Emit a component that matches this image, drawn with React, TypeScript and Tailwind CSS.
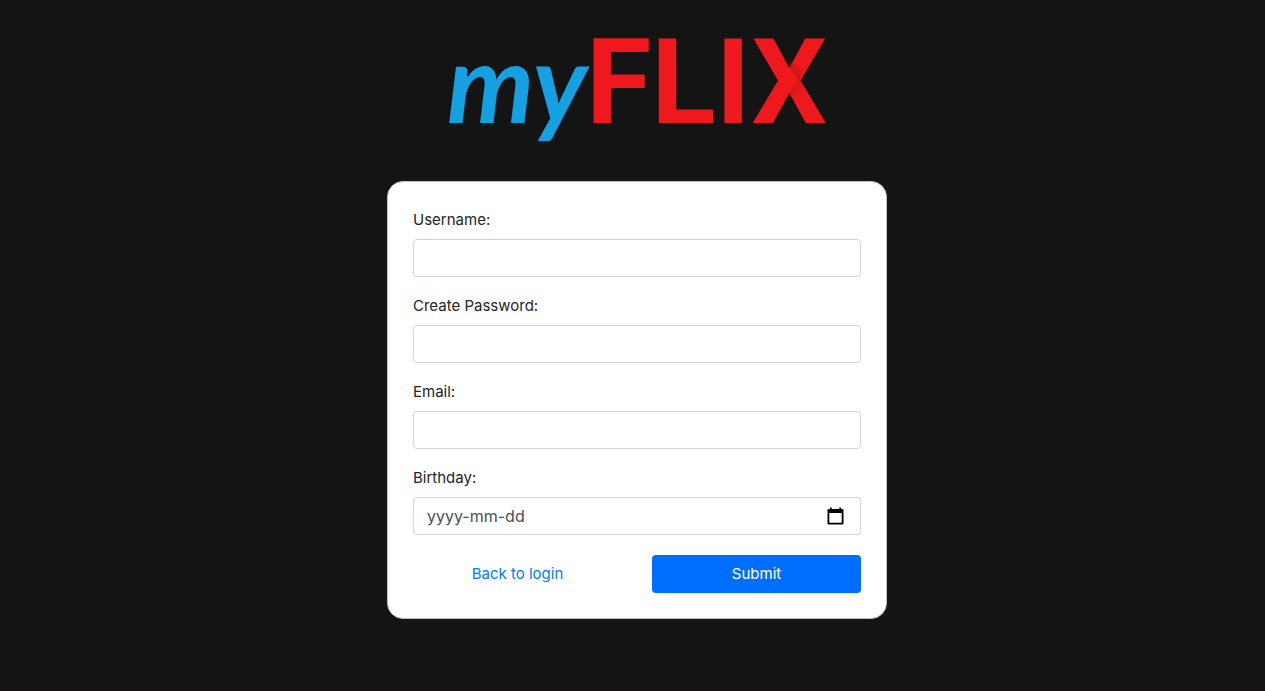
import React from "react";

type FieldProps = { id: string; label: string; type: string };

const labelClass = "leading-[26px]";
const inputClass =
  "h-[38px] w-full rounded border border-[#ced4da] bg-white px-[13px] text-base text-[#495057] placeholder:text-[#495057] outline-none focus:border-[#80bdff]";

function Field({ id, label, type }: FieldProps) {
  return (
    <div className="flex flex-col gap-1.5">
      <label htmlFor={id} className={labelClass}>{label}</label>
      <input id={id} name={id} type={type} className={inputClass} />
    </div>
  );
}

function Logo() {
  return (
    <svg viewBox="0 0 400 150" className="h-[150px] w-[400px] overflow-visible" role="img" aria-label="myFLIX">
      <defs>
        <linearGradient id="foldUpper" gradientUnits="userSpaceOnUse" x1="355" y1="65" x2="364" y2="56">
          <stop offset="0" stopColor="#a01015" stopOpacity="0.55" />
          <stop offset="1" stopColor="#a01015" stopOpacity="0" />
        </linearGradient>
        <linearGradient id="foldLower" gradientUnits="userSpaceOnUse" x1="355" y1="75" x2="364" y2="84">
          <stop offset="0" stopColor="#a01015" stopOpacity="0.4" />
          <stop offset="1" stopColor="#a01015" stopOpacity="0" />
        </linearGradient>
      </defs>
      <text x="10" y="113" fill="#15a0e1" fontFamily="Lato, sans-serif" fontSize="110" fontWeight="700" fontStyle="italic">my</text>
      <text x="149" y="113" fill="#ed191c" fontFamily="Roboto, sans-serif" fontSize="119" fontWeight="700">FLIX</text>
      <path d="M351 55 362 70 369 58 356 46z" fill="url(#foldUpper)" />
      <path d="M351 84 362 70 369 81 356 92z" fill="url(#foldLower)" />
    </svg>
  );
}

export default function App() {
  return (
    <main className="flex min-h-screen flex-col items-center border-b border-[#170a0f] bg-[#141414] pt-2.5 pb-12 pl-[9px] font-['Inter',sans-serif] text-[15px] text-[#212529]">
      <Logo />
      <form className="mt-[21px] flex w-full max-w-[500px] flex-col gap-4 rounded-2xl border border-[#bfbfbf] bg-white p-[25px]">
        <Field id="username" label="Username:" type="text" />
        <Field id="password" label="Create Password:" type="password" />
        <Field id="email" label="Email:" type="email" />
        <div className="flex flex-col gap-1.5">
          <label htmlFor="birthday" className={labelClass}>Birthday:</label>
          <div className="relative">
            <input id="birthday" name="birthday" type="text" placeholder="yyyy-mm-dd" className={inputClass} />
            <button type="button" aria-label="Choose date" className="absolute inset-y-0 right-4 flex items-center">
              <svg viewBox="0 0 20 20" className="size-5" fill="#000">
                <path fillRule="evenodd" d="M5 1.500h1.700V3h7.600V1.500H16V3h1.500a1 1 0 0 1 1 1v13.500a1 1 0 0 1-1 1h-14a1 1 0 0 1-1-1V4a1 1 0 0 1 1-1H5zM4.300 7v9.700h12.400V7z" />
              </svg>
            </button>
          </div>
        </div>
        <div className="mt-1 grid grid-cols-2 gap-[30px]">
          <a href="#login" className="flex h-[38px] items-center justify-center text-[#007bff]">Back to login</a>
          <button type="submit" className="h-[38px] rounded bg-[#006fff] text-white">Submit</button>
        </div>
      </form>
    </main>
  );
}
